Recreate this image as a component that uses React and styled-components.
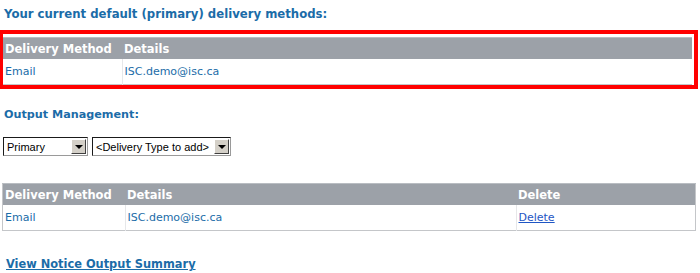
import styled, { createGlobalStyle } from "styled-components";

const GlobalStyle = createGlobalStyle`
  body {
    margin: 0;
    background: #fff;
    font-family: "DejaVu Sans", Verdana, sans-serif;
  }
`;

const Page = styled.div`
  width: 700px;
  height: 273px;
  padding-top: 7px;
  box-sizing: border-box;
  overflow: hidden;
`;

const Heading = styled.h2`
  margin: 0 0 ${(p) => p.gap || 0}px 4px;
  font-size: ${(p) => p.size || 12}px;
  line-height: 14px;
  font-weight: bold;
  color: #1b6ca8;
`;

const Highlight = styled.div`
  width: 698px;
  box-sizing: border-box;
  border: 4px solid #ff0000;
  border-left-width: 3px;
  padding: 3px 2px 0 0;
  margin-bottom: 19px;
`;

const Table = styled.table`
  width: ${(p) => p.width || "100%"};
  margin: ${(p) => p.top || 0}px 0 0 ${(p) => p.offset || 0}px;
  border-collapse: collapse;
  border: ${(p) => (p.framed ? "1px solid #c4c6c9" : "none")};
  border-bottom: 1px solid #c4c6c9;
`;

const Th = styled.th`
  background: #9ca1a8;
  border-top: 1px solid #b9bdc2;
  color: #fff;
  font-size: 11.5px;
  font-weight: bold;
  text-align: left;
  height: 21px;
  padding: 0 2px;
  white-space: nowrap;
  width: ${(p) => p.w || "auto"};
`;

const Td = styled.td`
  font-size: 11px;
  color: #1b6ca8;
  height: 25px;
  padding: 0 2px;
  border-left: ${(p) => (p.divided ? "1px solid #e6e7e9" : "none")};
`;

const DeleteLink = styled.a`
  color: #1f56c4;
  text-decoration: underline;
  font-size: 11px;
`;

const Controls = styled.div`
  display: flex;
  gap: 4px;
  margin: 15px 0 0 3px;
`;

const Combo = styled.div`
  display: flex;
  align-items: center;
  width: ${(p) => p.w}px;
  height: 19px;
  box-sizing: border-box;
  border: 1px solid #1a1a1a;
  border-right-color: #9a9a9a;
  border-bottom-color: #9a9a9a;
  background: #fff;
  font-family: "Liberation Sans", Arial, sans-serif;
  font-size: 11px;
  color: #000;
`;

const ComboText = styled.span`
  flex: 1;
  padding-left: 3px;
  white-space: nowrap;
  overflow: hidden;
`;

const ArrowButton = styled.span`
  width: 15px;
  height: 15px;
  margin-right: 1px;
  box-sizing: border-box;
  background: #d4d0c8;
  border: 1px solid;
  border-color: #fff #404040 #404040 #fff;
  display: flex;
  align-items: center;
  justify-content: center;
  &::after {
    content: "";
    border-left: 4px solid transparent;
    border-right: 4px solid transparent;
    border-top: 4px solid #000;
  }
`;

const SummaryLink = styled.a`
  display: inline-block;
  margin: 26px 0 0 6px;
  font-size: 11.4px;
  font-weight: bold;
  color: #1b6ca8;
  text-decoration: underline;
`;

const App = () => {
  return (
    <>
      <GlobalStyle />
      <Page>
        <Heading gap={9} size={11.7}>
          Your current default (primary) delivery methods:
        </Heading>
        <Highlight>
          <Table>
            <thead>
              <tr>
                <Th w="115px">Delivery Method</Th>
                <Th>Details</Th>
              </tr>
            </thead>
            <tbody>
              <tr>
                <Td>Email</Td>
                <Td divided>ISC.demo@isc.ca</Td>
              </tr>
            </tbody>
          </Table>
        </Highlight>
        <Heading size={11.2}>Output Management:</Heading>
        <Controls>
          <Combo w={85}>
            <ComboText>Primary</ComboText>
            <ArrowButton />
          </Combo>
          <Combo w={139}>
            <ComboText>&lt;Delivery Type to add&gt;</ComboText>
            <ArrowButton />
          </Combo>
        </Controls>
        <Table framed width="694px" offset={2} top={27}>
          <thead>
            <tr>
              <Th w="118px">Delivery Method</Th>
              <Th w="387px">Details</Th>
              <Th>Delete</Th>
            </tr>
          </thead>
          <tbody>
            <tr>
              <Td>Email</Td>
              <Td divided>ISC.demo@isc.ca</Td>
              <Td divided>
                <DeleteLink href="#">Delete</DeleteLink>
              </Td>
            </tr>
          </tbody>
        </Table>
        <SummaryLink href="#">View Notice Output Summary</SummaryLink>
      </Page>
    </>
  );
};

export default App;
